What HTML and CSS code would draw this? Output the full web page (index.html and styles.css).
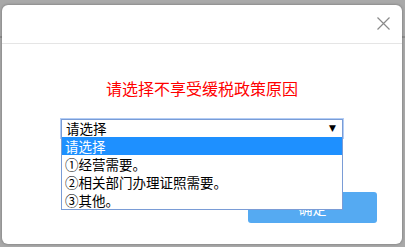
FILE: index.html
```html
<!DOCTYPE html>
<html lang="zh-CN">
<head>
  <meta charset="UTF-8" />
  <title>请选择不享受缓税政策原因</title>
  <link rel="stylesheet" href="styles.css">
</head>
<body>

  <div class="modal">
    <div class="modal-header">
      <span class="close-btn">
        <svg width="13" height="13" viewBox="0 0 13 13">
          <path d="M0.5 0.5 L12.5 12.5 M12.5 0.5 L0.5 12.5" stroke="#8a8a8a" stroke-width="1.2" fill="none"/>
        </svg>
      </span>
    </div>

    <div class="modal-body">
      <p class="title">请选择不享受缓税政策原因</p>

      <div class="select-wrap">
        <div class="select-box">
          <span>请选择</span>
          <span class="arrow">▼</span>
        </div>
        <ul class="dropdown">
          <li class="active">请选择</li>
          <li>①经营需要。</li>
          <li>②相关部门办理证照需要。</li>
          <li>③其他。</li>
        </ul>
      </div>
    </div>

    <div class="modal-footer">
      <button class="ok-btn">确定</button>
    </div>
  </div>

</body>
</html>
```

FILE: styles.css
```css
* {
  box-sizing: border-box;
}

html, body {
  height: 100%;
}

body {
  margin: 0;
  padding: 5px 3px 3px 2px;
  background:
    linear-gradient(#8f8f8f, #8f8f8f) 0 36px / 100% 2px no-repeat,
    #a9a9a9;
  font-family: "Noto Sans CJK SC", "Noto Sans", sans-serif;
}

.modal {
  width: 400px;
  height: 239px;
  background: #fff;
  border-radius: 6px;
  box-shadow: 0 0 3px rgba(0,0,0,0.35);
  position: relative;
}

.modal-header {
  height: 39px;
  border-bottom: 1px solid #e5e5e5;
  display: flex;
  justify-content: flex-end;
  align-items: center;
  padding: 0 12px 0 0;
}

.close-btn {
  display: flex;
  margin-top: -1px;
}

.modal-body {
  padding: 34px 59px 0 59px;
}

.title {
  margin: 0;
  text-align: center;
  color: #ff0000;
  font-size: 16px;
  line-height: 20px;
}

.select-wrap {
  position: relative;
  margin-top: 21px;
  width: 282px;
}

.select-box {
  height: 19px;
  border: 1px solid #7a9cd6;
  outline: 1px solid #b2cdf6;
  display: flex;
  justify-content: space-between;
  align-items: center;
  padding: 0 6px 0 4px;
  font-size: 13.5px;
  line-height: 17px;
  color: #000;
}

.arrow {
  font-size: 9px;
  font-family: "DejaVu Sans", sans-serif;
}

.dropdown {
  position: absolute;
  top: 18px;
  left: 0;
  width: 282px;
  margin: 0;
  padding: 0;
  list-style: none;
  background: #fff;
  border: 1px solid #7a9cd6;
  border-top: none;
  z-index: 2;
}

.dropdown li {
  height: 18px;
  line-height: 18px;
  padding-left: 3px;
  font-size: 13.5px;
  color: #000;
}

.dropdown li.active {
  background: #1e90ff;
  color: #fff;
}

.modal-footer {
  display: flex;
  justify-content: flex-end;
  padding: 54px 25px 0 0;
}

.ok-btn {
  width: 129px;
  height: 31px;
  border: none;
  border-radius: 3px;
  background: #55aaf2;
  color: #fff;
  font-family: "Noto Sans CJK SC", sans-serif;
  font-size: 14px;
}
```
